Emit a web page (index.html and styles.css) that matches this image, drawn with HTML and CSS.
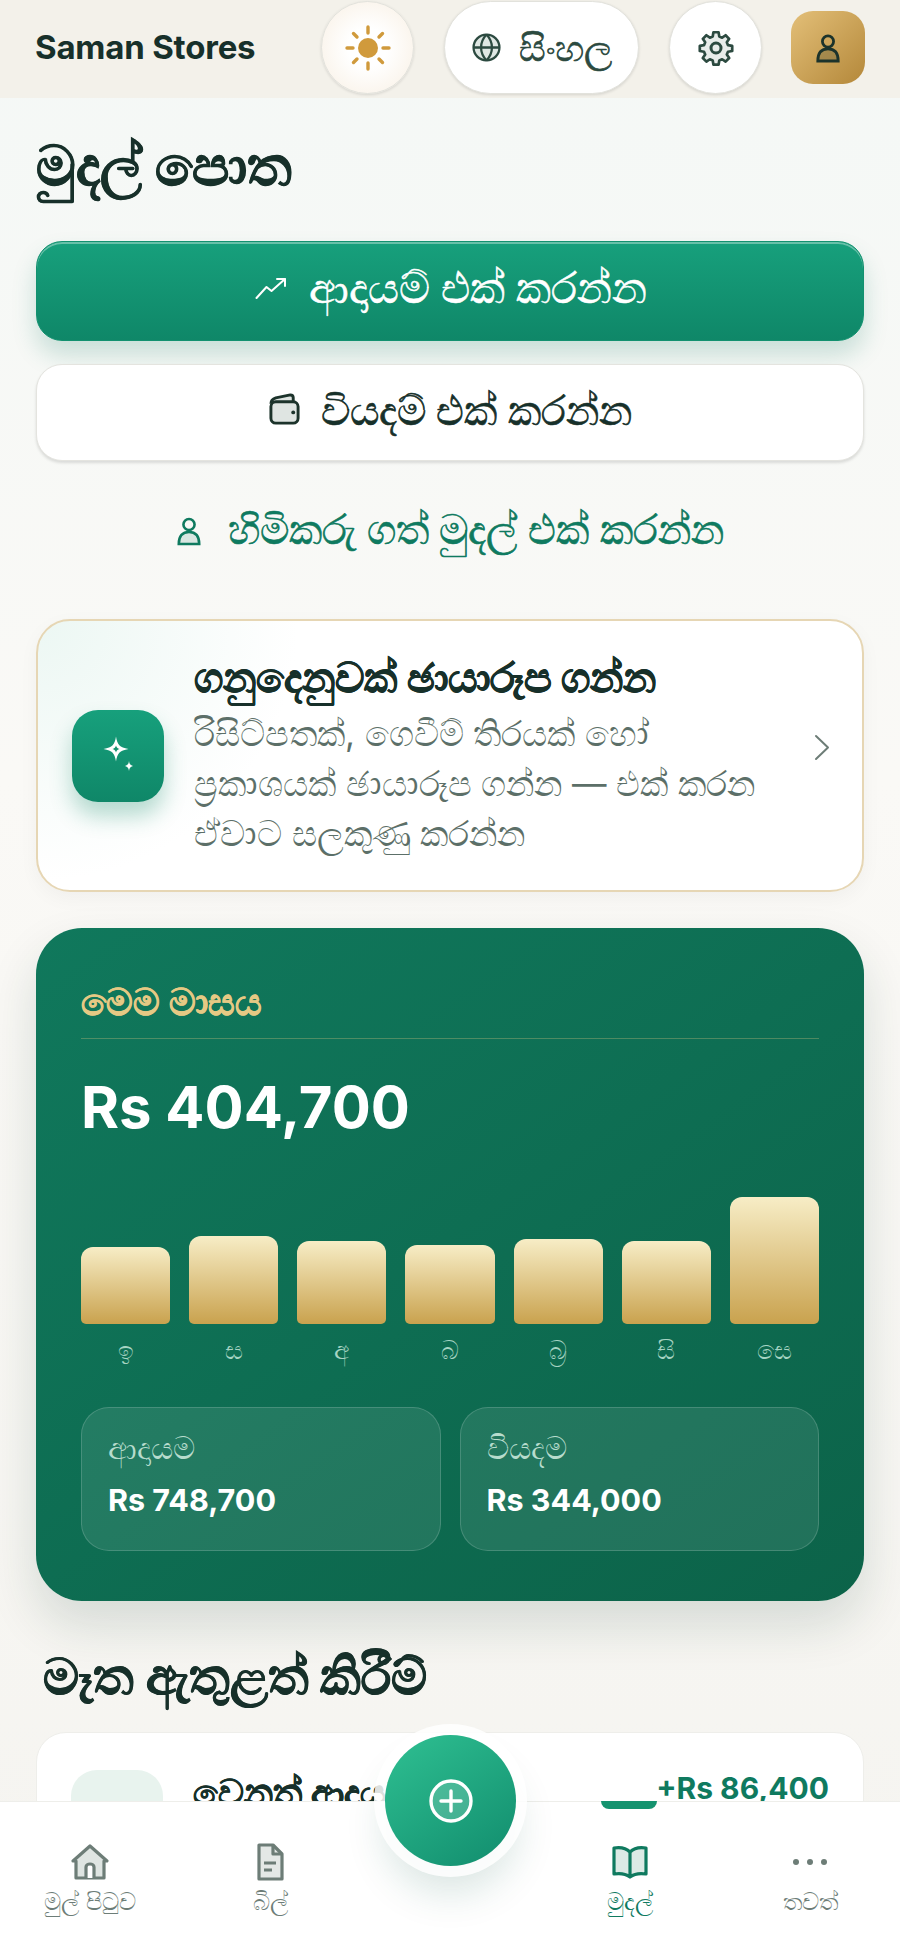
FILE: index.html
```html
<!DOCTYPE html>
<html lang="si">
<head>
    <meta charset="UTF-8">
    <meta name="viewport" content="width=device-width, initial-scale=1.0">
    <title>මුදල් පොත</title>
    <link rel="stylesheet" href="styles.css">
</head>
<body>
    <div class="app">
        <header class="topbar">
            <div class="brand">Saman Stores</div>
            <div class="top-actions">
                <button class="round-btn sun-btn" aria-label="theme">
                    <svg width="48" height="48" viewBox="0 0 48 48" fill="none" stroke="#d09a3c" stroke-width="3.400" stroke-linecap="round">
                        <circle cx="24" cy="24" r="10" fill="#d09a3c" stroke="none"/>
                        <path d="M24 3v6M24 39v6M3 24h6M39 24h6M9.500 9.500l3.500 3.500M35 35l3.500 3.500M9.500 38.500l3.500-3.500M35 13l3.500-3.500"/>
                    </svg>
                </button>
                <button class="lang-btn">
                    <svg width="29" height="29" viewBox="0 0 28 28" fill="#dfe7e3" stroke="#2c4a40" stroke-width="2.200">
                        <circle cx="14" cy="14" r="12.500"/>
                        <path d="M1.500 14h25M14 1.500c-7 7.500-7 17.500 0 25M14 1.500c7 7.500 7 17.500 0 25" fill="none"/>
                    </svg>
                    <span>සිංහල</span>
                </button>
                <button class="round-btn" aria-label="settings">
                    <svg width="40" height="40" viewBox="0 0 24 24" fill="#e8ecea" stroke="#2c4a40" stroke-width="1.800" stroke-linejoin="round">
                        <path d="M10.300 2.500h3.400l.5 2.800 1.900.8 2.300-1.600 2.400 2.400-1.600 2.300.8 1.900 2.800.5v3.400l-2.800.5-.8 1.900 1.600 2.300-2.400 2.400-2.300-1.600-1.900.8-.5 2.800h-3.400l-.5-2.800-1.900-.8-2.300 1.600-2.400-2.400 1.600-2.300-.8-1.900-2.800-.5v-3.400l2.800-.5.8-1.900-1.600-2.300 2.400-2.400 2.300 1.600 1.900-.8z" transform="translate(12 12) scale(.9) translate(-12 -13)"/>
                        <circle cx="12" cy="12" r="3" fill="none"/>
                    </svg>
                </button>
                <button class="avatar" aria-label="profile">
                    <svg width="26" height="30" viewBox="0 0 28 32" fill="rgba(28,51,43,.22)" stroke="#1c332b" stroke-width="3">
                        <circle cx="14" cy="9" r="6" fill="none"/>
                        <path d="M3 30c0-9 4-13 11-13s11 4 11 13z"/>
                    </svg>
                </button>
            </div>
        </header>

        <main class="content">
            <h1 class="page-title">මුදල් පොත</h1>

            <button class="btn btn-income">
                <svg width="32" height="22" viewBox="0 0 32 22" fill="none" stroke="#fff" stroke-width="2" stroke-linecap="round" stroke-linejoin="round">
                    <path d="M1.500 21l10-11 5 4L30 2M22 2h8v7"/>
                </svg>
                <span>ආදායම් එක් කරන්න</span>
            </button>
            <button class="btn btn-expense">
                <svg width="33" height="33" viewBox="0 0 34 34" fill="#dfe5e2" stroke="#1c332b" stroke-width="3" stroke-linejoin="round">
                    <path d="M3 11c0-3 2-5 5-6l15-3c2 0 3 1 3 3v4"/>
                    <rect x="3" y="9" width="28" height="22" rx="5"/>
                    <circle cx="26" cy="20" r="2" fill="#1c332b" stroke="none"/>
                </svg>
                <span>වියදම් එක් කරන්න</span>
            </button>
            <button class="btn btn-credit">
                <svg width="26" height="32" viewBox="0 0 28 32" fill="#d9e6e1" stroke="#0f7a5f" stroke-width="2.800">
                    <circle cx="14" cy="9" r="6" fill="none"/>
                    <path d="M3 30c0-9 4-13 11-13s11 4 11 13z"/>
                </svg>
                <span>හිමිකරු ගත් මුදල් එක් කරන්න</span>
            </button>

            <section class="scan-card">
                <div class="scan-icon">
                    <svg width="40" height="40" viewBox="0 0 40 40" fill="#fff">
                        <path d="M18 .5c1.200 8 3.500 11 12.500 12.500C21.500 14.500 19.200 17.500 18 25.500 16.800 17.500 14.500 14.500 5.500 13 14.500 11.500 16.800 8.500 18 .5z"/>
                        <path d="M18 9.500c.5 2 1.500 3 3.500 3.500-2 .5-3 1.500-3.500 3.500-.5-2-1.500-3-3.500-3.500 2-.5 3-1.500 3.500-3.500z" fill="#15936f"/>
                        <path d="M31 25c.4 3 1.200 4 4 5-2.800 1-3.600 2-4 5-.4-3-1.200-4-4-5 2.800-1 3.600-2 4-5z"/>
                    </svg>
                </div>
                <div class="scan-text">
                    <h3>ගනුදෙනුවක් ඡායාරූප ගන්න</h3>
                    <p>රිසිට්පතක්, ගෙවීම් තිරයක් හෝ<br>ප්‍රකාශයක් ඡායාරූප ගන්න — එක් කරන<br>ඒවාට සලකුණු කරන්න</p>
                </div>
                <svg class="chevron" width="16" height="27" viewBox="0 0 16 27" fill="none" stroke="#6d7d77" stroke-width="2" stroke-linecap="round" stroke-linejoin="round">
                    <path d="M2 2l12 11.500L2 25"/>
                </svg>
            </section>

            <section class="month-card">
                <div class="month-label">මෙම මාසය</div>
                <div class="month-total">Rs 404,700</div>
                <div class="bars">
                    <div class="bar-col"><div class="bar" style="height:77px"></div><span>ඉ</span></div>
                    <div class="bar-col"><div class="bar" style="height:88px"></div><span>ස</span></div>
                    <div class="bar-col"><div class="bar" style="height:83px"></div><span>අ</span></div>
                    <div class="bar-col"><div class="bar" style="height:79px"></div><span>බ</span></div>
                    <div class="bar-col"><div class="bar" style="height:85px"></div><span>බ්‍ර</span></div>
                    <div class="bar-col"><div class="bar" style="height:83px"></div><span>සි</span></div>
                    <div class="bar-col"><div class="bar" style="height:127px"></div><span>සෙ</span></div>
                </div>
                <div class="stats">
                    <div class="stat"><div class="stat-label">ආදායම</div><div class="stat-value">Rs 748,700</div></div>
                    <div class="stat"><div class="stat-label">වියදම</div><div class="stat-value">Rs 344,000</div></div>
                </div>
            </section>

            <h2 class="section-title">මෑත ඇතුළත් කිරීම්</h2>
            <section class="entry-card">
                <div class="entry-icon"></div>
                <div class="entry-name">වෙනත් ආදායම</div>
                <div class="entry-amount">+Rs 86,400</div>
            </section>
        </main>

        <nav class="bottom-nav">
            <a class="nav-item">
                <svg width="40" height="38" viewBox="0 0 40 38" fill="#dfe5e2" stroke="#6d7d77" stroke-width="3.200" stroke-linejoin="round">
                    <path d="M3 18L20 3l17 15h-3v17H6V18z"/>
                    <path d="M16 35V24c0-2 2-3 4-3s4 1 4 3v11" fill="#fff"/>
                </svg>
                <span>මුල් පිටුව</span>
            </a>
            <a class="nav-item">
                <svg width="30" height="38" viewBox="0 0 30 38" fill="#e4e8e6" stroke="#6d7d77" stroke-width="3.200" stroke-linejoin="round">
                    <path d="M4 2h14l9 9v25H4z"/>
                    <path d="M18 2v9h9M9 20h12M9 27h8" fill="none"/>
                </svg>
                <span>බිල්</span>
            </a>
            <div class="nav-gap"></div>
            <a class="nav-item active">
                <span class="nav-marker"></span>
                <svg width="36" height="38" viewBox="0 0 36 36" fill="#dceae5" stroke="#0f7a5f" stroke-width="3.200" stroke-linejoin="round">
                    <path d="M18 8C14 4 8 3 2 4v26c6-1 12 0 16 3 4-3 10-4 16-3V4c-6-1-12 0-16 4zM18 8v25"/>
                </svg>
                <span>මුදල්</span>
            </a>
            <a class="nav-item">
                <svg width="36" height="38" viewBox="0 0 36 38" fill="#6d7d77">
                    <circle cx="4" cy="19" r="3"/><circle cx="18" cy="19" r="3"/><circle cx="32" cy="19" r="3"/>
                </svg>
                <span>තවත්</span>
            </a>
            <button class="fab" aria-label="add">
                <svg width="46" height="46" viewBox="0 0 46 46" fill="rgba(255,255,255,.18)" stroke="#fff" stroke-width="3.400" stroke-linecap="round">
                    <circle cx="23" cy="23" r="20"/>
                    <path d="M23 13v20M13 23h20" fill="none"/>
                </svg>
            </button>
        </nav>
    </div>
</body>
</html>
```

FILE: styles.css
```css
* {
    box-sizing: border-box;
}
html, body {
    margin: 0;
    padding: 0;
}
body {
    font-family: Inter, "Noto Sans", sans-serif;
    color: #17302a;
    background: #f8f7f3;
}
button {
    font-family: inherit;
    cursor: pointer;
}
.app {
    position: relative;
    width: 900px;
    height: 1949px;
    overflow: hidden;
    background: linear-gradient(180deg, #f4f8f6 0%, #faf9f6 40%, #f5f4f0 100%);
}

/* top bar */
.topbar {
    height: 98px;
    padding: 0 35px 3px;
    display: flex;
    align-items: center;
    justify-content: space-between;
    background: #f3f1ea;
}
.brand {
    margin-bottom: 2px;
    font-size: 33px;
    font-weight: 700;
    letter-spacing: -0.2px;
    color: #17302a;
}
.top-actions {
    display: flex;
    align-items: center;
    gap: 30px;
}
.round-btn {
    width: 93px;
    height: 93px;
    border-radius: 50%;
    border: 1px solid #e2e2dc;
    background: #fff;
    display: flex;
    align-items: center;
    justify-content: center;
    padding: 0;
    box-shadow: 0 1px 3px rgba(0, 0, 0, 0.12);
}
.sun-btn {
    background: radial-gradient(circle, #fff 30%, #f8efe2 100%);
}
.lang-btn {
    width: 195px;
    height: 93px;
    padding: 0;
    border-radius: 47px;
    border: 1px solid #e2e2dc;
    background: #fff;
    display: flex;
    align-items: center;
    justify-content: center;
    gap: 18px;
    font-size: 37px;
    color: #2c4a40;
    box-shadow: 0 1px 3px rgba(0, 0, 0, 0.12);
}
.lang-btn span {
    -webkit-text-stroke: 0.7px #2c4a40;
}
.avatar {
    width: 74px;
    height: 73px;
    margin-left: -1px;
    border-radius: 22px;
    border: 0;
    padding: 0;
    background: linear-gradient(135deg, #e3bf78, #b4883a);
    display: flex;
    align-items: center;
    justify-content: center;
}

/* main column */
.content {
    padding: 0 36px;
    display: flex;
    flex-direction: column;
}
.page-title {
    margin: 33px 0 42px;
    font-size: 54.500px;
    line-height: 68px;
    font-weight: 700;
    color: #17302a;
    -webkit-text-stroke: 0.7px #17302a;
}
.btn {
    width: 100%;
    display: flex;
    align-items: center;
    justify-content: center;
    gap: 20px;
    padding: 0;
    font-size: 41px;
    font-weight: 500;
    border: 0;
}
.btn-income {
    height: 100px;
    padding: 0 0 6px 2px;
    gap: 22px;
    border-radius: 26px;
    color: #fff;
    font-size: 42.500px;
    -webkit-text-stroke: 0.6px #fff;
    border: 1px solid #12916f;
    background: linear-gradient(180deg, #17a07c, #0f8768);
    box-shadow: inset 0 2px 0 rgba(255, 255, 255, 0.35), 0 14px 24px rgba(15, 122, 95, 0.2);
}
.btn-expense {
    height: 97px;
    margin-top: 23px;
    padding-bottom: 6px;
    border-radius: 26px;
    background: #fff;
    color: #17302a;
    -webkit-text-stroke: 0.7px #17302a;
    border: 1px solid #e4e4df;
    box-shadow: 0 2px 3px rgba(0, 0, 0, 0.12);
}
.btn-credit {
    height: 100px;
    margin-top: 20px;
    gap: 26px;
    background: none;
    color: #0f7a5f;
    -webkit-text-stroke: 0.7px #0f7a5f;
}
.btn-credit span {
    padding-bottom: 4px;
}

/* scan card */
.scan-card {
    height: 273px;
    margin-top: 38px;
    padding: 0 49px 0 34px;
    display: flex;
    align-items: center;
    gap: 30px;
    border: 2px solid #e6d6b4;
    border-radius: 34px;
    background: radial-gradient(circle at 0 0, #ecf7f3 0, #fff 30%);
    box-shadow: 0 6px 20px rgba(0, 0, 0, 0.04);
}
.scan-icon {
    flex: none;
    width: 92px;
    height: 92px;
    border-radius: 26px;
    display: flex;
    align-items: center;
    justify-content: center;
    background: linear-gradient(180deg, #17a07c, #0f8768);
    box-shadow: 0 14px 22px rgba(15, 135, 104, 0.3);
}
.scan-text {
    flex: none;
    width: 590px;
}
.scan-text h3 {
    margin: 0 0 6px;
    font-size: 40.500px;
    line-height: 50px;
    font-weight: 700;
    color: #17302a;
    -webkit-text-stroke: 0.5px #17302a;
}
.scan-text p {
    margin: 0;
    font-size: 34.500px;
    line-height: 50px;
    color: #5c6f68;
}
.chevron {
    flex: none;
    margin: 0 0 16px auto;
}

/* month card */
.month-card {
    height: 673px;
    margin-top: 36px;
    padding: 52px 45px 0;
    border-radius: 46px;
    color: #fff;
    background: linear-gradient(145deg, #10785c, #0c6349);
    box-shadow: 0 24px 50px rgba(15, 60, 45, 0.14);
}
.month-label {
    padding-bottom: 14px;
    font-size: 37px;
    line-height: 44px;
    font-weight: 600;
    color: #e5c984;
    border-bottom: 1px solid rgba(229, 201, 132, 0.3);
    -webkit-text-stroke: 0.5px #e5c984;
}
.month-total {
    margin-top: 34px;
    font-size: 58px;
    line-height: 68px;
    font-weight: 700;
}
.bars {
    margin-top: 56px;
    height: 179px;
    display: flex;
    align-items: flex-end;
    gap: 19px;
}
.bar-col {
    flex: 1;
    display: flex;
    flex-direction: column;
}
.bar {
    border-radius: 12px 12px 5px 5px;
    background: linear-gradient(180deg, #f7edc6, #c9a24e);
}
.bar-col span {
    text-align: center;
    font-size: 25px;
    line-height: 52px;
    color: #a6d4c3;
}
.stats {
    margin-top: 31px;
    display: flex;
    gap: 19px;
}
.stat {
    flex: 1;
    height: 144px;
    padding: 20px 26px;
    border-radius: 28px;
    border: 1px solid rgba(255, 255, 255, 0.16);
    background: rgba(255, 255, 255, 0.09);
}
.stat-label {
    font-size: 31px;
    line-height: 40px;
    color: #b7dccd;
}
.stat-value {
    margin-top: 14px;
    font-size: 30.500px;
    line-height: 36px;
    font-weight: 700;
}

/* recent entries */
.section-title {
    margin: 44px 7px 25px;
    font-size: 49.500px;
    line-height: 62px;
    font-weight: 700;
    -webkit-text-stroke: 0.7px #17302a;
}
.entry-card {
    height: 150px;
    padding: 37px 34px 0;
    display: flex;
    align-items: flex-start;
    border-radius: 30px;
    background: #fff;
    border: 1px solid #eeeeea;
}
.entry-icon {
    flex: none;
    width: 92px;
    height: 92px;
    margin-right: 30px;
    border-radius: 26px;
    background: #e8f3ee;
}
.entry-name {
    white-space: nowrap;
    font-size: 36px;
    line-height: 44px;
    font-weight: 600;
    -webkit-text-stroke: 0.4px #17302a;
}
.entry-amount {
    margin-left: auto;
    font-size: 30px;
    line-height: 36px;
    font-weight: 700;
    color: #0f7a5f;
}

/* bottom nav */
.bottom-nav {
    position: absolute;
    left: 0;
    right: 0;
    bottom: 0;
    height: 148px;
    display: grid;
    grid-template-columns: repeat(5, 180px);
    background: #fff;
    border-top: 1px solid #eeeeea;
}
.nav-item {
    position: relative;
    display: flex;
    flex-direction: column;
    align-items: center;
    padding-top: 41px;
    gap: 6px;
    font-size: 24px;
    color: #6d7d77;
}
.nav-item.active {
    color: #0f7a5f;
}
.nav-marker {
    position: absolute;
    top: -1px;
    left: 61px;
    width: 56px;
    height: 8px;
    border-radius: 0 0 8px 8px;
    background: #15936f;
}
.fab {
    position: absolute;
    left: 385px;
    top: -67px;
    width: 131px;
    height: 131px;
    padding: 0;
    border: 0;
    border-radius: 50%;
    display: flex;
    align-items: center;
    justify-content: center;
    background: linear-gradient(145deg, #2fc092, #118c6d);
    box-shadow: 0 0 0 11px rgba(255, 255, 255, 0.85), 0 26px 40px rgba(15, 90, 70, 0.16);
}
```
